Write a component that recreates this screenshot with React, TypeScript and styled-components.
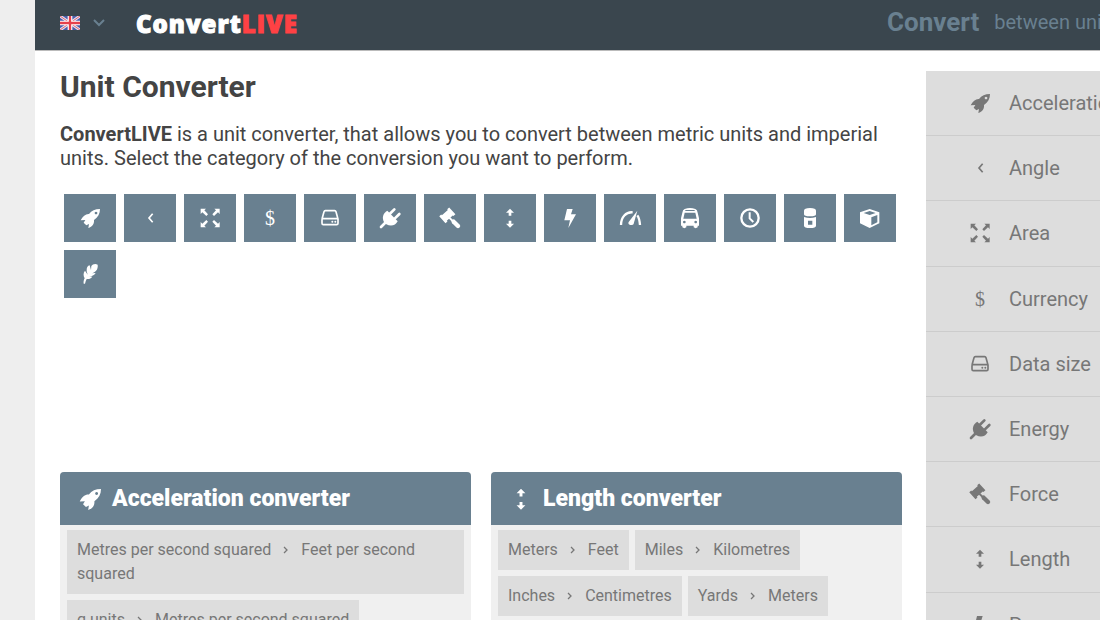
import React from "react";
import styled, { createGlobalStyle } from "styled-components";

const slate = "#698090";

const GlobalStyle = createGlobalStyle`
  * { box-sizing: border-box; }
  html { scrollbar-width: none; overflow-x: hidden; }
  body {
    margin: 0;
    background: #eee;
    color: #444;
    font-family: Roboto, "Liberation Sans", sans-serif;
    font-size: 20px;
    line-height: 24px;
  }
  a { color: inherit; text-decoration: none; }
`;

const Page = styled.div`
  margin-left: 35px;
  min-width: 1191px;
  background: #fff;
`;

const Header = styled.header`
  display: grid;
  grid-template-columns: 76px minmax(751px, 1fr) 314px;
  align-items: center;
  height: 51px;
  padding: 0 25px;
  background: #3a464e;
  border-bottom: 1px solid #bbb;
`;

const LanguageButton = styled.button`
  display: flex;
  align-items: center;
  gap: 12px;
  padding: 0 0 4px;
  border: 0;
  background: none;
  color: ${slate};
`;

const Logo = styled.a`
  display: block;
  color: #fff;
  font-family: "Open Sans", sans-serif;
  font-weight: 800;
  font-size: 24px;
  letter-spacing: 1px;
  -webkit-text-stroke: 1px currentColor;
  padding-bottom: 2px;
`;

const LogoAccent = styled.span`
  color: #ff4144;
`;

const Tagline = styled.p`
  display: flex;
  align-items: center;
  gap: 15px;
  margin: 0;
  padding-bottom: 6px;
  color: ${slate};
  white-space: nowrap;
`;

const TaglineLead = styled.strong`
  font-size: 26px;
`;

const Columns = styled.div`
  display: grid;
  grid-template-columns: minmax(842px, 1fr) 300px;
  gap: 24px;
  padding: 20px 0 0 25px;
`;

const Content = styled.main`
  min-width: 0;
`;

const Title = styled.h1`
  margin: 0;
  font-size: 30px;
  line-height: 32px;
`;

const Intro = styled.p`
  margin: 19px 0 20px;
`;

const Tiles = styled.nav`
  display: flex;
  flex-wrap: wrap;
  gap: 8px;
  padding: 4px;
`;

const Tile = styled.a`
  display: flex;
  align-items: center;
  justify-content: center;
  width: 52px;
  height: 48px;
  background: ${slate};
  color: #fff;
`;

const Cards = styled.div`
  display: grid;
  grid-template-columns: 1fr 1fr;
  gap: 20px;
  margin-top: 170px;
`;

const Card = styled.section`
  background: #f0f0f0;
  border-radius: 4px;
  overflow: hidden;
`;

const CardTitle = styled.h2`
  display: flex;
  align-items: center;
  gap: 11px;
  height: 53px;
  margin: 0;
  padding: 0 19px;
  background: ${slate};
  color: #fff;
  font-size: 23px;
  font-weight: 900;
`;

const Links = styled.div`
  display: flex;
  flex-wrap: wrap;
  gap: 6px;
  padding: 5px 7px;
`;

const ConversionLink = styled.a`
  padding: 8px 10px;
  background: #ddd;
  color: #777;
  font-size: 16px;
`;

const Arrow = styled.svg`
  width: 6px;
  height: 10px;
  margin: 0 12px;
`;

const Sidebar = styled.nav`
  display: grid;
  grid-auto-rows: 1fr;
  min-height: 978px;
  background: #ddd;
  color: #777;
`;

const SidebarLink = styled.a`
  display: flex;
  align-items: center;
  gap: 19px;
  padding-left: 44px;
  border-bottom: 1px solid #ccc;
`;

const IconSvg = styled.svg<{ $size: number }>`
  flex: none;
  display: block;
  width: ${(p) => p.$size}px;
  height: ${(p) => p.$size}px;
  overflow: visible;
`;

const Glyph = styled.span<{ $size: number }>`
  flex: none;
  width: ${(p) => p.$size}px;
  text-align: center;
  font-family: "Liberation Serif", serif;
  font-size: 20px;
`;

const corner = "M2 2H18L13 7L24 19L19 24L7 13L2 18Z";
const line = { fill: "none", stroke: "currentColor" };

const shapes: Record<string, React.ReactNode> = {
  rocket: (
    <path
      fillRule="evenodd"
      d="M60 3C45 3 35 8 27 18C18 17 8 24 2 37L16 36L11 44L19 52L27 48L25 60C37 56 43 48 42 36C54 28 60 17 60 3ZM48 11a4 4 0 1 0 0.1 0Z"
    />
  ),
  angle: <path d="M38 17L27 30L38 43" {...line} strokeWidth="5" />,
  expand: (
    <>
      <path d={corner} />
      <path d={corner} transform="matrix(-1 0 0 1 61 0)" />
      <path d={corner} transform="matrix(1 0 0 -1 0 60)" />
      <path d={corner} transform="matrix(-1 0 0 -1 61 60)" />
    </>
  ),
  drive: (
    <>
      <path
        d="M6 33L12 11Q13 8 16 8H44Q47 8 48 11L54 33V46Q54 50 50 50H10Q6 50 6 46V35Q6 32 9 32H51Q54 32 54 35"
        {...line}
        strokeWidth="5"
      />
      <circle cx="37" cy="41" r="3" />
      <circle cx="46" cy="41" r="3" />
    </>
  ),
  plug: (
    <>
      <path d="M22 8L53 40C47 53 32 56 19 49L12 42C5 29 9 15 22 8Z" />
      <path d="M29 18L43 4M44 32L58 18M18 42L3 57" {...line} strokeWidth="8" strokeLinecap="round" />
    </>
  ),
  gavel: (
    <>
      <path
        transform="translate(22 22) rotate(-42)"
        d="M-20 -14H-12V-11H12V-14H20V14H12V11H-12V14H-20Z"
      />
      <path d="M27 28L38 39" {...line} strokeWidth="6" />
      <path d="M41 41L54 54" {...line} strokeWidth="13" strokeLinecap="round" />
    </>
  ),
  length: <path d="M30 2L42 14H34V23H26V14H18ZM30 59L42 47H34V38H26V47H18Z" />,
  bolt: <path d="M21 3H38L33 19H48L25 60L30 37H13Z" />,
  gauge: (
    <>
      <path d="M3 51C3 28 18 11 38 13M52 22C58 30 59 39 60 51" {...line} strokeWidth="7" />
      <path d="M52 8L41 47C38 55 21 51 26 42Z" />
    </>
  ),
  bus: (
    <path
      fillRule="evenodd"
      d="M14 3Q30 -3 46 3Q52 5 53 14L57 31V53H53V58Q47 63 41 58V53H19V58Q13 63 7 58V53H3V31L7 14Q8 5 14 3ZM16 6V9H44V6ZM14 14L10 32H50L46 14ZM13 38a4 4 0 1 0 0.1 0ZM47 38a4 4 0 1 0 0.1 0Z"
    />
  ),
  clock: (
    <>
      <circle cx="30" cy="30" r="26" {...line} strokeWidth="7" />
      <path d="M29 13V31L40 42" {...line} strokeWidth="6" />
    </>
  ),
  canister: (
    <path
      fillRule="evenodd"
      d="M12 8Q12 0 30 0Q48 0 48 8V19Q48 25 30 25Q12 25 12 19ZM12 27Q30 33 48 27V53Q48 60 30 60Q12 60 12 53ZM24 38V50H37V38Z"
    />
  ),
  cube: (
    <path
      fillRule="evenodd"
      d="M29 3L58 13V46L29 60L0 46V13ZM11 15L29 21L47 15L29 9ZM34 28V52L52 43V21Z"
    />
  ),
  feather: (
    <path d="M53 2C45 -2 38 1 34 6L33 18L29 4C23 5 19 11 20 22L23 32L15 20C9 27 10 36 14 43C11 48 10 54 11 59H15C16 54 18 49 20 45C27 46 33 44 37 38L27 37C36 37 43 34 47 27L35 28C46 25 55 17 53 2Z" />
  ),
};

function Icon({ name, size = 20 }: { name: string; size?: number }) {
  if (name === "dollar") return <Glyph $size={size} aria-hidden="true">$</Glyph>;
  return (
    <IconSvg $size={size} viewBox="0 0 60 60" fill="currentColor" aria-hidden="true">
      {shapes[name]}
    </IconSvg>
  );
}

const categories = [
  ["Acceleration", "rocket"],
  ["Angle", "angle"],
  ["Area", "expand"],
  ["Currency", "dollar"],
  ["Data size", "drive"],
  ["Energy", "plug"],
  ["Force", "gavel"],
  ["Length", "length"],
  ["Power", "bolt"],
  ["Pressure", "gauge"],
  ["Speed", "bus"],
  ["Time", "clock"],
  ["Torque", "canister"],
  ["Volume", "cube"],
  ["Weight", "feather"],
];

const cards = [
  {
    title: "Acceleration converter",
    icon: "rocket",
    links: [
      ["Metres per second squared", "Feet per second squared"],
      ["g units", "Metres per second squared"],
    ],
  },
  {
    title: "Length converter",
    icon: "length",
    links: [
      ["Meters", "Feet"],
      ["Miles", "Kilometres"],
      ["Inches", "Centimetres"],
      ["Yards", "Meters"],
    ],
  },
];

function Flag() {
  return (
    <svg width="20" height="14" viewBox="0 0 60 42" aria-hidden="true">
      <rect width="60" height="42" fill="#4a5cab" />
      <path d="M0 0L60 42M60 0L0 42" stroke="#dfe2f2" strokeWidth="9" />
      <path d="M0 0L60 42M60 0L0 42" stroke="#e8616b" strokeWidth="3" />
      <path d="M30 0V42M0 21H60" stroke="#fff" strokeWidth="14" />
      <path d="M30 0V42M0 21H60" stroke="#e5404c" strokeWidth="7" />
    </svg>
  );
}

export default function App() {
  return (
    <>
      <GlobalStyle />
      <Page>
        <Header>
          <LanguageButton type="button" aria-label="Language">
            <Flag />
            <svg width="14" height="10" viewBox="0 0 14 10" fill="none" aria-hidden="true">
              <path d="M2 2L7 7L12 2" stroke="currentColor" strokeWidth="2" />
            </svg>
          </LanguageButton>
          <Logo href="#">
            Convert<LogoAccent>LIVE</LogoAccent>
          </Logo>
          <Tagline>
            <TaglineLead>Convert</TaglineLead>
            <span>between units</span>
          </Tagline>
        </Header>
        <Columns>
          <Content>
            <Title>Unit Converter</Title>
            <Intro>
              <strong>ConvertLIVE</strong> is a unit converter, that allows you to convert between
              metric units and imperial units. Select the category of the conversion you want to
              perform.
            </Intro>
            <Tiles aria-label="Categories">
              {categories.map(([label, icon]) => (
                <Tile key={label} href="#" aria-label={label}>
                  <Icon name={icon} />
                </Tile>
              ))}
            </Tiles>
            <Cards>
              {cards.map((card) => (
                <Card key={card.title}>
                  <CardTitle>
                    <Icon name={card.icon} size={22} />
                    {card.title}
                  </CardTitle>
                  <Links>
                    {card.links.map(([from, to]) => (
                      <ConversionLink key={from + to} href="#">
                        {from}
                        <Arrow viewBox="0 0 6 10" aria-hidden="true">
                          <path d="M1 2L4 5L1 8" fill="none" stroke="currentColor" strokeWidth="1.3" />
                        </Arrow>
                        {to}
                      </ConversionLink>
                    ))}
                  </Links>
                </Card>
              ))}
            </Cards>
          </Content>
          <Sidebar aria-label="All converters">
            {categories.map(([label, icon]) => (
              <SidebarLink key={label} href="#">
                <Icon name={icon} />
                {label}
              </SidebarLink>
            ))}
          </Sidebar>
        </Columns>
      </Page>
    </>
  );
}
